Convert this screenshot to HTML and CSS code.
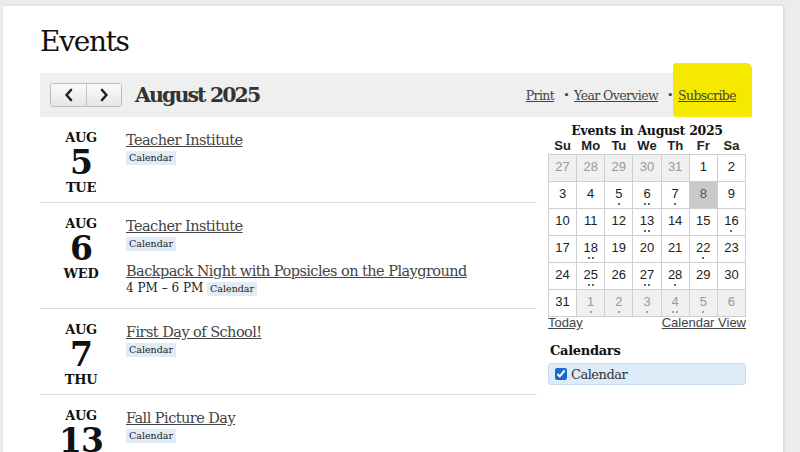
FILE: index.html
```html
<!DOCTYPE html>
<html lang="en">
<head>
    <meta charset="UTF-8">
    <meta name="viewport" content="width=device-width, initial-scale=1.0">
    <title>Events</title>
    <link rel="stylesheet" href="styles.css">
</head>
<body>
    <div class="page">
        <h1 class="page-title">Events</h1>

        <div class="toolbar">
            <div class="nav-buttons">
                <button class="nav-btn" aria-label="Previous month">
                    <svg width="10" height="14" viewBox="0 0 10 14"><polyline points="7,2 2.5,7 7,12" fill="none" stroke="#222" stroke-width="2.6" stroke-linecap="round" stroke-linejoin="round"/></svg>
                </button>
                <button class="nav-btn" aria-label="Next month">
                    <svg width="10" height="14" viewBox="0 0 10 14"><polyline points="3,2 7.5,7 3,12" fill="none" stroke="#222" stroke-width="2.6" stroke-linecap="round" stroke-linejoin="round"/></svg>
                </button>
            </div>
            <h2 class="month-title">August 2025</h2>
            <div class="toolbar-links">
                <a href="#">Print</a>
                <span class="sep">•</span>
                <a href="#">Year Overview</a>
                <span class="sep">•</span>
                <a href="#">Subscribe</a>
            </div>
            <span class="highlight"></span>
        </div>

        <div class="content">
            <div class="event-list">
                <div class="event-day">
                    <div class="date">
                        <span class="date-month">AUG</span>
                        <span class="date-num">5</span>
                        <span class="date-wday">TUE</span>
                    </div>
                    <div class="day-events">
                        <div class="event">
                            <a href="#" class="event-title">Teacher Institute</a>
                            <div class="event-meta"><span class="tag">Calendar</span></div>
                        </div>
                    </div>
                </div>

                <div class="event-day">
                    <div class="date">
                        <span class="date-month">AUG</span>
                        <span class="date-num">6</span>
                        <span class="date-wday">WED</span>
                    </div>
                    <div class="day-events">
                        <div class="event">
                            <a href="#" class="event-title">Teacher Institute</a>
                            <div class="event-meta"><span class="tag">Calendar</span></div>
                        </div>
                        <div class="event">
                            <a href="#" class="event-title">Backpack Night with Popsicles on the Playground</a>
                            <div class="event-meta"><span class="time">4 PM – 6 PM</span> <span class="tag">Calendar</span></div>
                        </div>
                    </div>
                </div>

                <div class="event-day">
                    <div class="date">
                        <span class="date-month">AUG</span>
                        <span class="date-num">7</span>
                        <span class="date-wday">THU</span>
                    </div>
                    <div class="day-events">
                        <div class="event">
                            <a href="#" class="event-title">First Day of School!</a>
                            <div class="event-meta"><span class="tag">Calendar</span></div>
                        </div>
                    </div>
                </div>

                <div class="event-day">
                    <div class="date">
                        <span class="date-month">AUG</span>
                        <span class="date-num">13</span>
                        <span class="date-wday">WED</span>
                    </div>
                    <div class="day-events">
                        <div class="event">
                            <a href="#" class="event-title">Fall Picture Day</a>
                            <div class="event-meta"><span class="tag">Calendar</span></div>
                        </div>
                    </div>
                </div>
            </div>

            <aside class="sidebar">
                <div class="mini-cal">
                    <div class="mini-cal-title">Events in August 2025</div>
                    <table class="mini-cal-grid">
                        <thead>
                            <tr><th>Su</th><th>Mo</th><th>Tu</th><th>We</th><th>Th</th><th>Fr</th><th>Sa</th></tr>
                        </thead>
                        <tbody>
                            <tr>
                                <td class="other"><span class="n">27</span><span class="dots"></span></td>
                                <td class="other"><span class="n">28</span><span class="dots"></span></td>
                                <td class="other"><span class="n">29</span><span class="dots"></span></td>
                                <td class="other"><span class="n">30</span><span class="dots"></span></td>
                                <td class="other"><span class="n">31</span><span class="dots"></span></td>
                                <td><span class="n">1</span><span class="dots"></span></td>
                                <td><span class="n">2</span><span class="dots"></span></td>
                            </tr>
                            <tr>
                                <td><span class="n">3</span><span class="dots"></span></td>
                                <td><span class="n">4</span><span class="dots"></span></td>
                                <td><span class="n">5</span><span class="dots"><i></i></span></td>
                                <td><span class="n">6</span><span class="dots"><i></i><i></i></span></td>
                                <td><span class="n">7</span><span class="dots"><i></i></span></td>
                                <td class="today"><span class="n">8</span><span class="dots"></span></td>
                                <td><span class="n">9</span><span class="dots"></span></td>
                            </tr>
                            <tr>
                                <td><span class="n">10</span><span class="dots"></span></td>
                                <td><span class="n">11</span><span class="dots"></span></td>
                                <td><span class="n">12</span><span class="dots"></span></td>
                                <td><span class="n">13</span><span class="dots"><i></i><i></i></span></td>
                                <td><span class="n">14</span><span class="dots"></span></td>
                                <td><span class="n">15</span><span class="dots"></span></td>
                                <td><span class="n">16</span><span class="dots"><i></i></span></td>
                            </tr>
                            <tr>
                                <td><span class="n">17</span><span class="dots"></span></td>
                                <td><span class="n">18</span><span class="dots"><i></i><i></i></span></td>
                                <td><span class="n">19</span><span class="dots"></span></td>
                                <td><span class="n">20</span><span class="dots"></span></td>
                                <td><span class="n">21</span><span class="dots"></span></td>
                                <td><span class="n">22</span><span class="dots"><i></i></span></td>
                                <td><span class="n">23</span><span class="dots"></span></td>
                            </tr>
                            <tr>
                                <td><span class="n">24</span><span class="dots"></span></td>
                                <td><span class="n">25</span><span class="dots"><i></i><i></i></span></td>
                                <td><span class="n">26</span><span class="dots"></span></td>
                                <td><span class="n">27</span><span class="dots"><i></i><i></i></span></td>
                                <td><span class="n">28</span><span class="dots"><i></i></span></td>
                                <td><span class="n">29</span><span class="dots"></span></td>
                                <td><span class="n">30</span><span class="dots"></span></td>
                            </tr>
                            <tr>
                                <td><span class="n">31</span><span class="dots"></span></td>
                                <td class="other"><span class="n">1</span><span class="dots"><i></i></span></td>
                                <td class="other"><span class="n">2</span><span class="dots"><i></i></span></td>
                                <td class="other"><span class="n">3</span><span class="dots"><i></i></span></td>
                                <td class="other"><span class="n">4</span><span class="dots"><i></i><i></i></span></td>
                                <td class="other"><span class="n">5</span><span class="dots"><i></i></span></td>
                                <td class="other"><span class="n">6</span><span class="dots"></span></td>
                            </tr>
                        </tbody>
                    </table>
                    <div class="mini-cal-links">
                        <a href="#">Today</a>
                        <a href="#">Calendar View</a>
                    </div>
                </div>

                <div class="calendars">
                    <h3 class="calendars-title">Calendars</h3>
                    <label class="cal-option">
                        <input type="checkbox" checked>
                        <span>Calendar</span>
                    </label>
                </div>
            </aside>
        </div>
    </div>
</body>
</html>
```

FILE: styles.css
```css
html, body {
    margin: 0;
    height: 100%;
    overflow: hidden;
}

body {
    background: #ececec;
    font-family: "DejaVu Serif", "Liberation Serif", serif;
    color: #222;
}

a {
    color: #444;
}

.page {
    margin: 6px 17px 0 3px;
    padding: 0 31px 0 37px;
    background: #fff;
    min-height: 460px;
    box-shadow: 1px 0 3px rgba(0, 0, 0, 0.12);
}

.page-title {
    margin: 0;
    padding-top: 19px;
    height: 48px;
    font-size: 28px;
    font-weight: normal;
    line-height: 34px;
    letter-spacing: -1.3px;
    color: #111;
}

/* 顶部工具栏 */
.toolbar {
    position: relative;
    display: flex;
    align-items: center;
    height: 44px;
    padding: 0 16px 0 10px;
    background: #efefef;
}

.nav-buttons {
    display: flex;
    border: 1px solid #bdbdbd;
    border-radius: 3px;
    overflow: hidden;
}

.nav-btn {
    display: flex;
    align-items: center;
    justify-content: center;
    width: 35px;
    height: 22px;
    padding: 0;
    border: 0;
    background: linear-gradient(#fbfbfb, #e6e6e6);
}

.nav-btn + .nav-btn {
    border-left: 1px solid #c4c4c4;
}

.month-title {
    margin: 0 0 0 13px;
    font-size: 20.5px;
    font-weight: bold;
    letter-spacing: -1.9px;
    color: #333;
}

.toolbar-links {
    position: relative;
    z-index: 1;
    margin-left: auto;
    display: flex;
    align-items: center;
    gap: 5px;
    font-size: 12.5px;
    letter-spacing: -0.6px;
}

.toolbar-links .sep {
    font-size: 11px;
    color: #444;
    margin-left: 4px;
}

.highlight {
    position: absolute;
    left: 633px;
    top: -10px;
    width: 79px;
    height: 54px;
    background: #f5e900;
    border-radius: 3px 6px 2px 4px;
    z-index: 0;
}

/* 内容区 */
.content {
    display: grid;
    grid-template-columns: 497px 1fr;
    gap: 11px;
}

.event-day {
    display: flex;
    gap: 4px;
    padding: 13px 0 6px;
    border-bottom: 1px solid #dcdcdc;
}

.date {
    width: 82px;
    display: flex;
    flex-direction: column;
    align-items: center;
    font-weight: bold;
    color: #111;
}

.date-month,
.date-wday {
    font-size: 13px;
    line-height: 16px;
    letter-spacing: -0.3px;
}

.date-num {
    font-size: 33px;
    line-height: 34px;
    letter-spacing: -1px;
}

.day-events {
    display: flex;
    flex-direction: column;
    gap: 10px;
    padding-bottom: 6px;
}

.event-title {
    font-size: 14.5px;
    line-height: 18px;
    letter-spacing: -0.55px;
    color: #444;
}

.event-meta {
    margin-top: 1px;
    font-size: 12px;
    line-height: 15px;
    color: #222;
}

.tag {
    display: inline-block;
    padding: 0 3px;
    background: #e1ecf7;
    font-size: 9.5px;
    line-height: 14px;
    color: #222;
}

/* 侧边栏 */
.sidebar {
    padding: 6px 6px 0 0;
}

.mini-cal-title {
    text-align: center;
    font-size: 12.5px;
    font-weight: bold;
    letter-spacing: -0.3px;
    line-height: 15px;
    color: #111;
}

.mini-cal-grid {
    width: 100%;
    border-collapse: collapse;
    table-layout: fixed;
    font-family: "Liberation Sans", Arial, sans-serif;
    font-size: 13px;
    color: #222;
}

.mini-cal-grid th {
    font-weight: bold;
    padding: 0;
    height: 16px;
    line-height: 16px;
}

.mini-cal-grid td {
    height: 26px;
    padding: 0;
    border: 1px solid #cfcfcf;
    text-align: center;
    vertical-align: top;
}

.mini-cal-grid .n {
    display: block;
    margin-top: 4px;
    line-height: 15px;
}

.mini-cal-grid .dots {
    display: flex;
    justify-content: center;
    gap: 2px;
    height: 6px;
    align-items: center;
}

.mini-cal-grid .dots i {
    width: 2px;
    height: 2px;
    border-radius: 50%;
    background: #333;
}

.mini-cal-grid td.other {
    background: #f0f0f0;
    color: #999;
}

.mini-cal-grid td.other .dots i {
    background: #888;
}

.mini-cal-grid td.today {
    background: #c9c9c9;
    color: #555;
}

.mini-cal-links {
    display: flex;
    justify-content: space-between;
    font-family: "Liberation Sans", Arial, sans-serif;
    font-size: 13px;
    line-height: 12px;
}

.mini-cal-links a {
    color: #444;
}

.calendars {
    margin-top: 14px;
}

.calendars-title {
    margin: 0 0 5px 2px;
    font-size: 13px;
    font-weight: bold;
    letter-spacing: -0.3px;
    color: #111;
}

.cal-option {
    display: flex;
    align-items: center;
    gap: 4px;
    height: 20px;
    padding: 0 6px;
    background: #deebf8;
    border: 1px solid #c9dcf0;
    border-radius: 3px;
    font-size: 13px;
    letter-spacing: -0.5px;
    color: #333;
}

.cal-option input {
    margin: 0;
    width: 12px;
    height: 12px;
    accent-color: #1b6ac9;
}
```
